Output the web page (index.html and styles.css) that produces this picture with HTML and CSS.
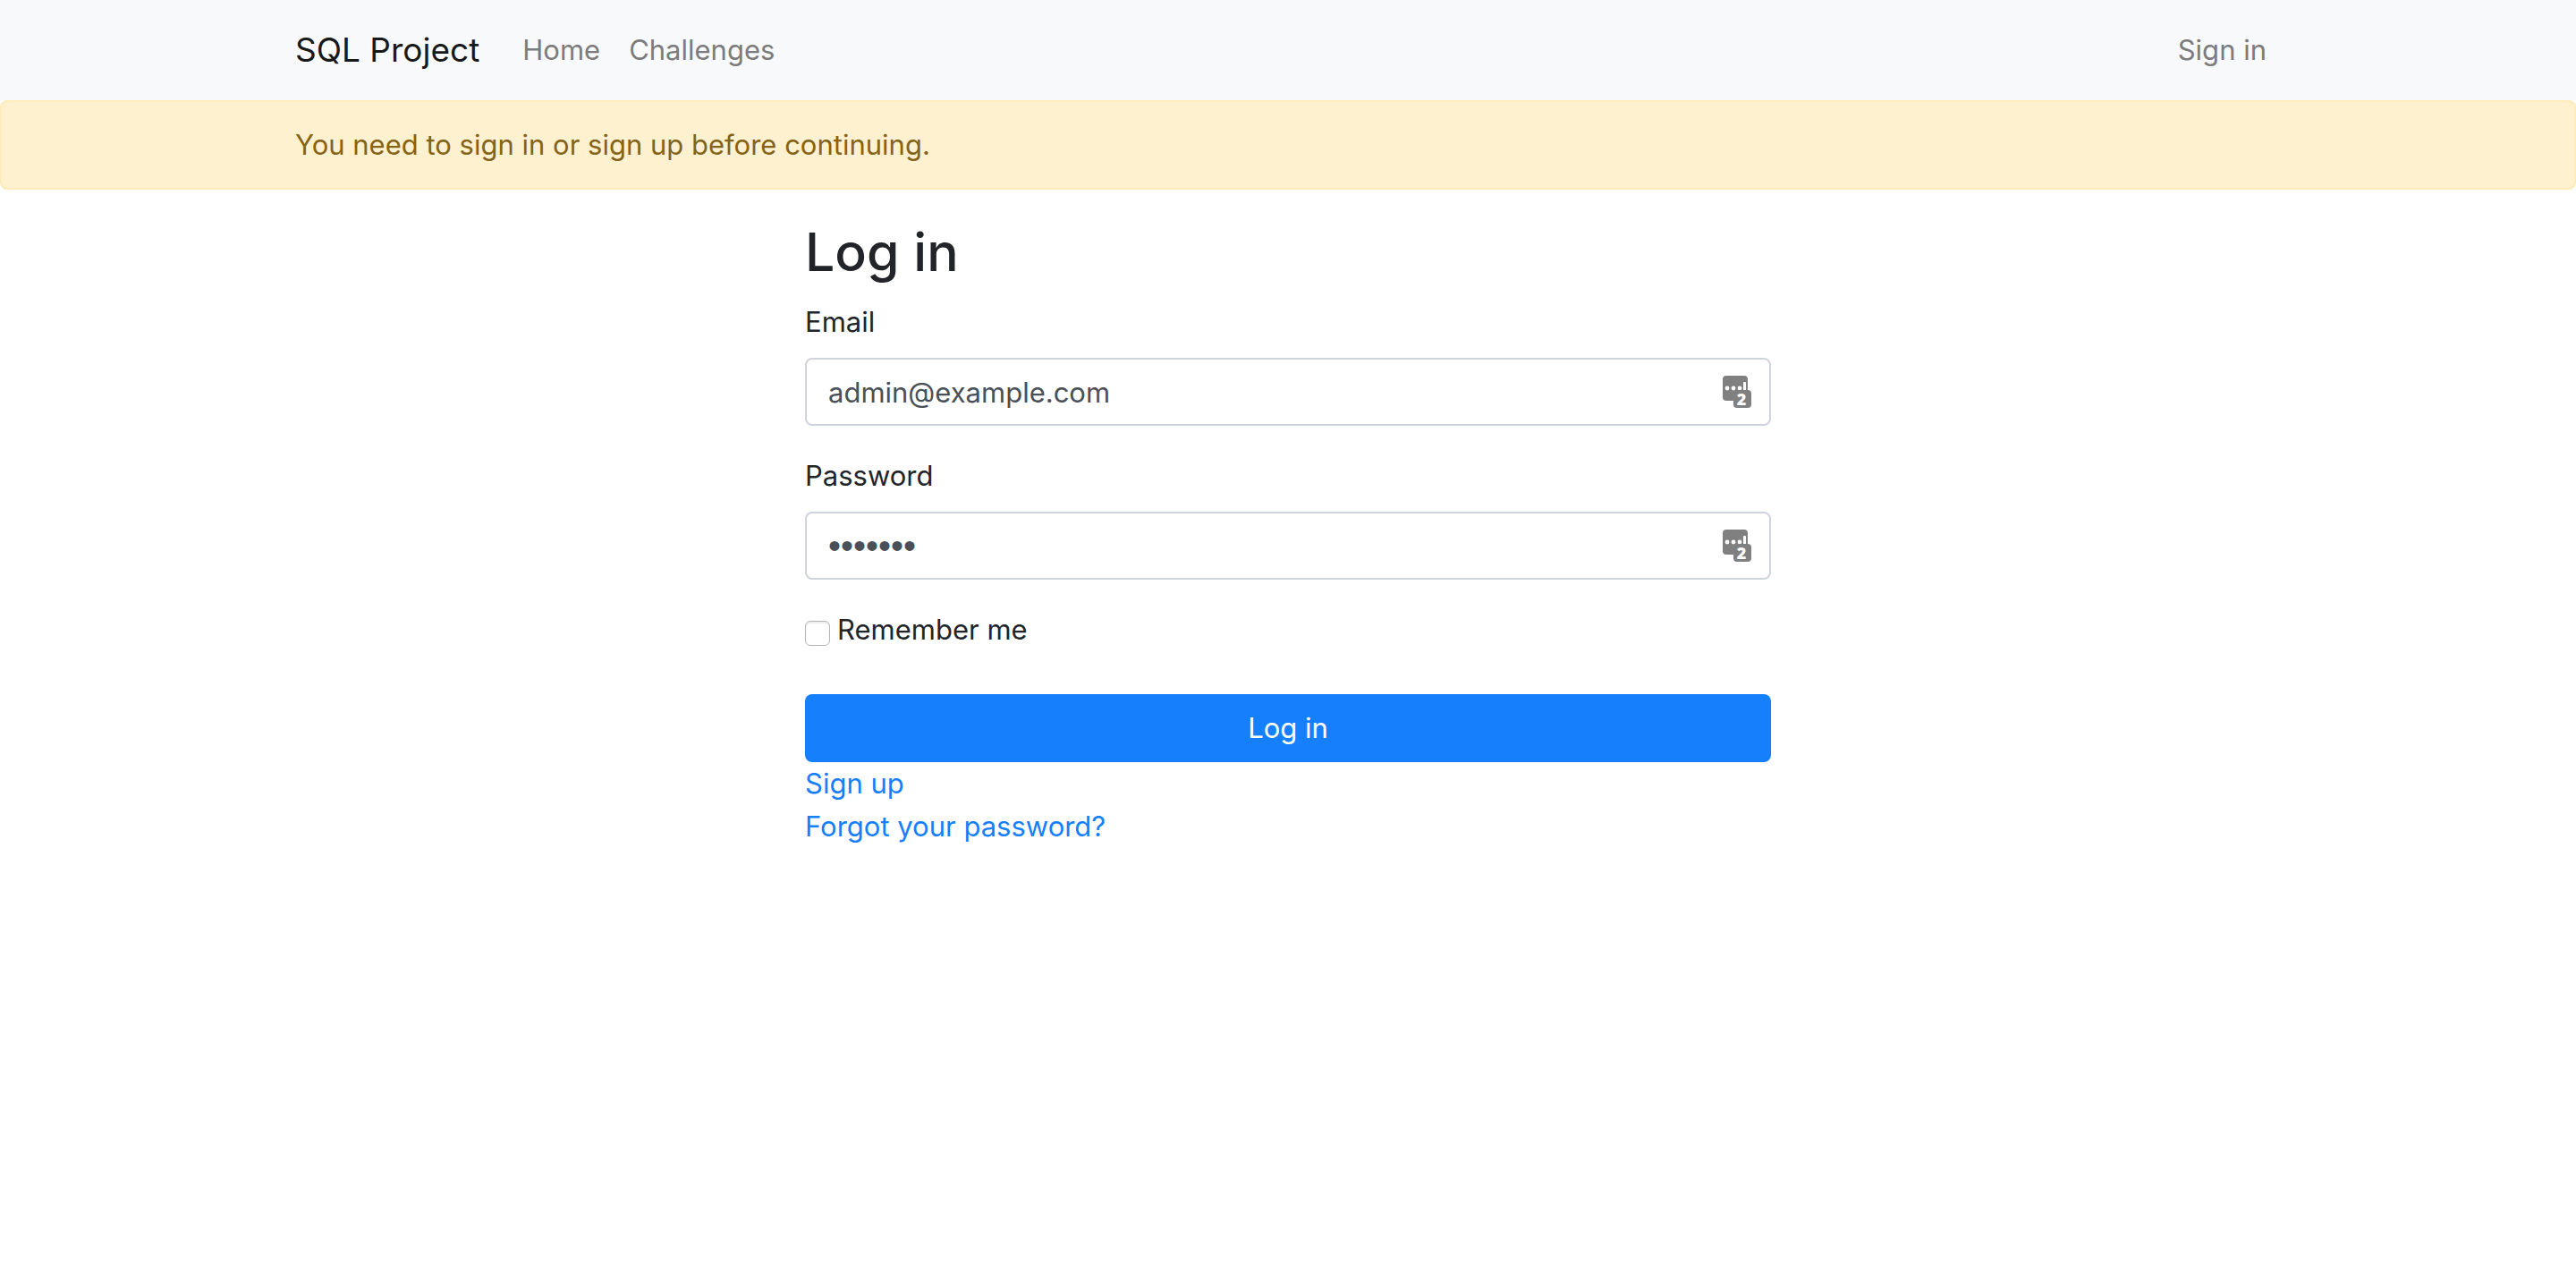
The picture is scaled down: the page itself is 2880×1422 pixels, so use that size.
FILE: index.html
```html
<!DOCTYPE html>
<html lang="en">
<head>
  <meta charset="utf-8">
  <meta name="viewport" content="width=device-width, initial-scale=1">
  <title>SQL Project</title>
  <link rel="stylesheet" href="styles.css">
</head>
<body>
  <header class="navbar">
    <div class="container navbar-inner">
      <a class="brand" href="#">SQL Project</a>
      <nav class="nav">
        <a class="nav-link" href="#">Home</a>
        <a class="nav-link" href="#">Challenges</a>
      </nav>
      <nav class="nav nav-end">
        <a class="nav-link" href="#">Sign in</a>
      </nav>
    </div>
  </header>
  <div class="alert" role="alert">
    <div class="container">You need to sign in or sign up before continuing.</div>
  </div>
  <main class="login">
    <h2 class="title">Log in</h2>
    <form>
      <div class="form-group">
        <label class="label" for="email">Email</label>
        <div class="field">
          <input class="input" id="email" type="email" value="admin@example.com">
          <svg class="manager" viewBox="0 0 32 36" aria-hidden="true">
            <rect class="manager-box" width="28" height="28" rx="4"/>
            <circle class="manager-mark" cx="5" cy="14" r="2.4"/>
            <circle class="manager-mark" cx="12" cy="14" r="2.4"/>
            <circle class="manager-mark" cx="19" cy="14" r="2.4"/>
            <rect class="manager-mark" x="23" y="7" width="3" height="10" rx="1"/>
            <rect class="manager-box" x="12" y="16" width="20" height="20" rx="4"/>
            <text class="manager-count" x="21" y="33">2</text>
          </svg>
        </div>
      </div>
      <div class="form-group">
        <label class="label" for="password">Password</label>
        <div class="field">
          <input class="input input-password" id="password" type="password" value="example">
          <svg class="manager" viewBox="0 0 32 36" aria-hidden="true">
            <rect class="manager-box" width="28" height="28" rx="4"/>
            <circle class="manager-mark" cx="5" cy="14" r="2.4"/>
            <circle class="manager-mark" cx="12" cy="14" r="2.4"/>
            <circle class="manager-mark" cx="19" cy="14" r="2.4"/>
            <rect class="manager-mark" x="23" y="7" width="3" height="10" rx="1"/>
            <rect class="manager-box" x="12" y="16" width="20" height="20" rx="4"/>
            <text class="manager-count" x="21" y="33">2</text>
          </svg>
        </div>
      </div>
      <div class="form-group remember">
        <input class="checkbox" id="remember" type="checkbox">
        <label class="label" for="remember">Remember me</label>
      </div>
      <button class="button" type="submit">Log in</button>
    </form>
    <div class="links">
      <a class="link" href="#">Sign up</a>
      <a class="link" href="#">Forgot your password?</a>
    </div>
  </main>
</body>
</html>
```
FILE: styles.css
```css
* {
  box-sizing: border-box;
}

body {
  margin: 0;
  background: #fff;
  color: #212529;
  font-family: Inter, "Liberation Sans", sans-serif;
  font-size: 31px;
  line-height: 48px;
}

a {
  text-decoration: none;
}

.container {
  max-width: 2280px;
  margin: 0 auto;
  padding: 0 30px;
}

.navbar {
  padding: 16px 0;
  background: #f8f9fb;
}

.navbar-inner {
  display: flex;
  align-items: center;
}

.brand {
  margin-right: 32px;
  padding: 10px 0;
  color: #18191a;
  font-size: 37px;
  line-height: 60px;
}

.nav {
  display: flex;
}

.nav-end {
  margin-left: auto;
}

.nav-link {
  padding: 16px;
  color: #7c7c7d;
}

.alert {
  margin-bottom: 32px;
  padding: 24px 0;
  border: 2px solid #feebb9;
  border-radius: 8px;
  background: #fef1d0;
  color: #856317;
}

.login {
  max-width: 1080px;
  margin: 0 auto;
}

.title {
  margin: 0 0 16px;
  font-size: 59px;
  font-weight: 500;
  line-height: 76px;
}

.form-group {
  margin-bottom: 32px;
}

.label {
  display: block;
  margin-bottom: 16px;
}

.field {
  position: relative;
}

.input {
  display: block;
  width: 100%;
  height: 76px;
  padding: 12px 24px;
  border: 2px solid #ced4dc;
  border-radius: 8px;
  background: #fff;
  color: #495057;
  font: inherit;
}

.input-password {
  font-family: "Liberation Sans", sans-serif;
  font-size: 40px;
}

.manager {
  position: absolute;
  top: 20px;
  right: 22px;
  width: 32px;
  height: 36px;
  overflow: visible;
}

.manager-box {
  fill: #808080;
}

.manager-mark {
  fill: #fff;
}

.manager-count {
  fill: #fff;
  font-family: "Open Sans", sans-serif;
  font-size: 18px;
  font-weight: 800;
  text-anchor: middle;
}

.remember {
  display: flex;
  align-items: flex-start;
  gap: 8px;
}

.checkbox {
  width: 28px;
  height: 28px;
  margin: 14px 0 0;
  border: 1px solid #b4b4b4;
  border-radius: 6px;
  background: #fff;
  box-shadow: inset 0 2px 2px #ececec;
  appearance: none;
}

.button {
  display: block;
  width: 100%;
  padding: 14px 26px;
  border: 0;
  border-radius: 8px;
  background: #167ffc;
  color: #fff;
  font: inherit;
}

.links {
  display: flex;
  flex-direction: column;
  align-items: flex-start;
}

.link {
  color: #167ffc;
}
```
